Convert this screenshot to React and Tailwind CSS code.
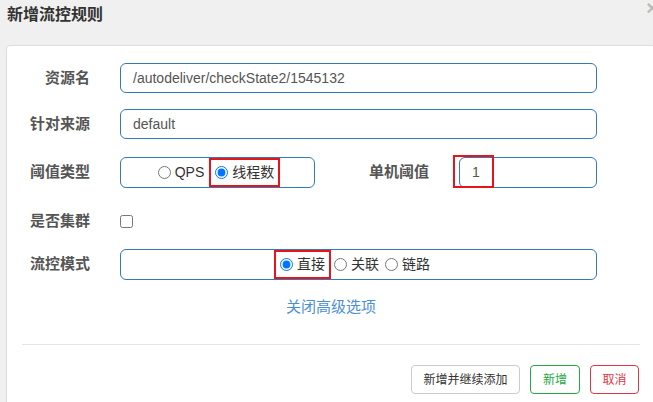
import React from "react";

const font = { fontFamily: '"Liberation Sans", "Noto Sans CJK SC", sans-serif' };

const Label = ({ children, className = "w-[83px]" }) => (
  <div className={`${className} shrink-0 text-right text-[15px] font-bold text-[#555]`}>
    {children}
  </div>
);

const Radio = ({ label, checked, marked }) => (
  <label
    className={`flex items-center gap-[4px] text-[14px] text-[#333] ${
      marked ? "border-2 border-[#e8141c] px-[4px] py-[2px]" : "px-[3px]"
    }`}
  >
    <input type="radio" defaultChecked={checked} className="m-0 h-[13px] w-[13px]" readOnly />
    <span>{label}</span>
  </label>
);

const App = () => (
  <div className="relative h-[402px] w-[653px] overflow-hidden bg-[#f0f0f0]" style={font}>
    <span className="absolute right-[-5px] top-[-7px] text-[20px] font-bold text-[#bbb]">×</span>

    <div className="flex h-[30px] items-center pl-[7px] text-[16px] font-bold text-[#333]">
      新增流控规则
    </div>

    <div className="ml-[6px] mt-[15px] w-[650px] rounded-t-[4px] border border-[#ddd] bg-white pt-[17px]">
      {/* 资源名 */}
      <div className="flex h-[30px] items-center">
        <Label>资源名</Label>
        <div className="ml-[30px] flex h-[30px] w-[477px] items-center rounded-[6px] border border-[#337ab7] pl-[12px] text-[14px] text-[#555]">
          /autodeliver/checkState2/1545132
        </div>
      </div>

      {/* 针对来源 */}
      <div className="mt-[16px] flex h-[30px] items-center">
        <Label>针对来源</Label>
        <div className="ml-[30px] flex h-[30px] w-[477px] items-center rounded-[6px] border border-[#337ab7] pl-[12px] text-[14px] text-[#555]">
          default
        </div>
      </div>

      {/* 阈值类型 / 单机阈值 */}
      <div className="mt-[18px] flex h-[31px] items-center">
        <Label>阈值类型</Label>
        <div className="ml-[30px] flex h-[31px] w-[195px] items-center justify-center gap-[2px] rounded-[6px] border border-[#337ab7]">
          <Radio label="QPS" />
          <Radio label="线程数" checked marked />
        </div>
        <Label className="w-[114px]">单机阈值</Label>
        <div className="relative ml-[30px] flex h-[31px] w-[138px] items-center rounded-[6px] border border-[#337ab7] pl-[12px] text-[14px] text-[#555]">
          1
          <span className="absolute left-[-7px] top-[-3px] h-[33px] w-[41px] border-2 border-[#e8141c]" />
        </div>
      </div>

      {/* 是否集群 */}
      <div className="mt-[18px] flex h-[30px] items-center">
        <Label>是否集群</Label>
        <input type="checkbox" className="m-0 ml-[30px] h-[13px] w-[13px]" readOnly />
      </div>

      {/* 流控模式 */}
      <div className="mt-[13px] flex h-[31px] items-center">
        <Label>流控模式</Label>
        <div className="ml-[30px] flex h-[31px] w-[477px] items-center justify-center rounded-[6px] border border-[#337ab7] pr-[10px]">
          <Radio label="直接" checked marked />
          <Radio label="关联" />
          <Radio label="链路" />
        </div>
      </div>

      <div className="mt-[17px] flex h-[20px] items-center justify-center text-[15px] text-[#4a8fd6]">
        关闭高级选项
      </div>

      <div className="mx-[15px] mt-[27px] h-px bg-[#e5e5e5]" />

      <div className="mt-[20px] flex justify-end gap-[10px] pb-[20px] pr-[16px] text-[12px]">
        <button className="h-[29px] w-[109px] rounded-[4px] border border-[#ccc] bg-white text-[#333]">
          新增并继续添加
        </button>
        <button className="h-[29px] w-[50px] rounded-[4px] border border-[#28a745] bg-white text-[#28a745]">
          新增
        </button>
        <button className="h-[29px] w-[49px] rounded-[4px] border border-[#dc3545] bg-white text-[#dc3545]">
          取消
        </button>
      </div>
    </div>
  </div>
);

export default App;
